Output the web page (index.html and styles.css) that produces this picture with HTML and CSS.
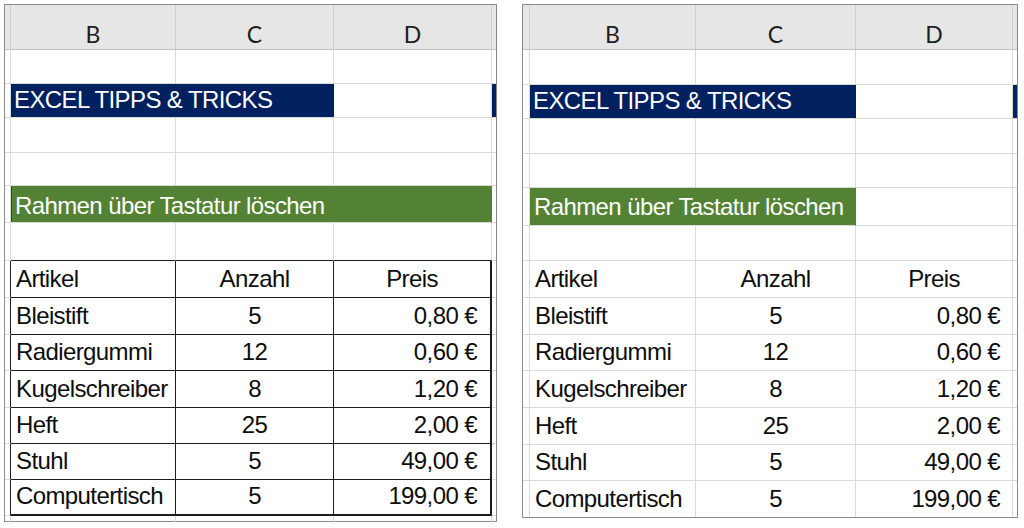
FILE: index.html
```html
<!DOCTYPE html>
<html lang="de">
<head>
<meta charset="utf-8">
<title>Rahmen über Tastatur löschen</title>
<link rel="stylesheet" href="styles.css">
</head>
<body>
<div class="page">
  <div class="sheet sheet-left">
    <div class="row hdr">
      <div class="c"></div><div class="c">B</div><div class="c">C</div><div class="c">D</div><div class="c"></div>
    </div>
    <div class="row h1"><div class="c"></div><div class="c"></div><div class="c"></div><div class="c"></div><div class="c"></div></div>
    <div class="row h2">
      <div class="c"></div>
      <div class="c blue span2">EXCEL TIPPS &amp; TRICKS</div>
      <div class="c"></div>
      <div class="c blue-e"></div>
    </div>
    <div class="row h3"><div class="c"></div><div class="c"></div><div class="c"></div><div class="c"></div><div class="c"></div></div>
    <div class="row h4"><div class="c"></div><div class="c"></div><div class="c"></div><div class="c"></div><div class="c"></div></div>
    <div class="row h5">
      <div class="c"></div>
      <div class="c green span3">Rahmen über Tastatur löschen</div>
      <div class="c"></div>
    </div>
    <div class="row h6 tbl-top"><div class="c"></div><div class="c"></div><div class="c"></div><div class="c"></div><div class="c"></div></div>
    <div class="row t1 tbl"><div class="c"></div><div class="c txt">Artikel</div><div class="c ctr">Anzahl</div><div class="c ctr">Preis</div><div class="c"></div></div>
    <div class="row t2 tbl"><div class="c"></div><div class="c txt">Bleistift</div><div class="c ctr">5</div><div class="c num">0,80 €</div><div class="c"></div></div>
    <div class="row t3 tbl"><div class="c"></div><div class="c txt">Radiergummi</div><div class="c ctr">12</div><div class="c num">0,60 €</div><div class="c"></div></div>
    <div class="row t4 tbl"><div class="c"></div><div class="c txt">Kugelschreiber</div><div class="c ctr">8</div><div class="c num">1,20 €</div><div class="c"></div></div>
    <div class="row t5 tbl"><div class="c"></div><div class="c txt">Heft</div><div class="c ctr">25</div><div class="c num">2,00 €</div><div class="c"></div></div>
    <div class="row t6 tbl"><div class="c"></div><div class="c txt">Stuhl</div><div class="c ctr">5</div><div class="c num">49,00 €</div><div class="c"></div></div>
    <div class="row t7 tbl tbl-last"><div class="c"></div><div class="c txt">Computertisch</div><div class="c ctr">5</div><div class="c num">199,00 €</div><div class="c"></div></div>
    <div class="row tail"><div class="c"></div><div class="c"></div><div class="c"></div><div class="c"></div><div class="c"></div></div>
  </div>

  <div class="sheet sheet-right">
    <div class="row hdr">
      <div class="c"></div><div class="c">B</div><div class="c">C</div><div class="c">D</div><div class="c"></div>
    </div>
    <div class="row h1"><div class="c"></div><div class="c"></div><div class="c"></div><div class="c"></div><div class="c"></div></div>
    <div class="row h2">
      <div class="c"></div>
      <div class="c blue span2">EXCEL TIPPS &amp; TRICKS</div>
      <div class="c"></div>
      <div class="c blue-e"></div>
    </div>
    <div class="row h3"><div class="c"></div><div class="c"></div><div class="c"></div><div class="c"></div><div class="c"></div></div>
    <div class="row h4"><div class="c"></div><div class="c"></div><div class="c"></div><div class="c"></div><div class="c"></div></div>
    <div class="row h5">
      <div class="c"></div>
      <div class="c green span2">Rahmen über Tastatur löschen</div>
      <div class="c"></div>
      <div class="c"></div>
    </div>
    <div class="row h6"><div class="c"></div><div class="c"></div><div class="c"></div><div class="c"></div><div class="c"></div></div>
    <div class="row t1"><div class="c"></div><div class="c txt">Artikel</div><div class="c ctr">Anzahl</div><div class="c ctr">Preis</div><div class="c"></div></div>
    <div class="row t2"><div class="c"></div><div class="c txt">Bleistift</div><div class="c ctr">5</div><div class="c num">0,80 €</div><div class="c"></div></div>
    <div class="row t3"><div class="c"></div><div class="c txt">Radiergummi</div><div class="c ctr">12</div><div class="c num">0,60 €</div><div class="c"></div></div>
    <div class="row t4"><div class="c"></div><div class="c txt">Kugelschreiber</div><div class="c ctr">8</div><div class="c num">1,20 €</div><div class="c"></div></div>
    <div class="row t5"><div class="c"></div><div class="c txt">Heft</div><div class="c ctr">25</div><div class="c num">2,00 €</div><div class="c"></div></div>
    <div class="row t6"><div class="c"></div><div class="c txt">Stuhl</div><div class="c ctr">5</div><div class="c num">49,00 €</div><div class="c"></div></div>
    <div class="row t7"><div class="c"></div><div class="c txt">Computertisch</div><div class="c ctr">5</div><div class="c num">199,00 €</div><div class="c"></div></div>
  </div>
</div>
</body>
</html>
```

FILE: styles.css
```css
html, body {
  margin: 0;
  padding: 0;
  background: #ffffff;
}

.page {
  display: flex;
  align-items: flex-start;
  padding: 4px 0 0 4px;
}

.sheet {
  border: 1px solid #8a8a8a;
  display: flex;
  flex-direction: column;
  background: #ffffff;
  font-family: "Liberation Sans", Arial, sans-serif;
  font-size: 24px;
  letter-spacing: -0.6px;
  color: #0d0d0d;
}

.sheet-left {
  --cols: 6px 165px 158px 158px 4px;
  --num-pad: 13px;
}

.sheet-right {
  --cols: 7px 166px 160px 157px 4px;
  --num-pad: 12px;
  margin-left: 25px;
}

.row {
  display: grid;
  grid-template-columns: var(--cols);
}

.c {
  box-sizing: border-box;
  border-right: 1px solid #dadada;
  border-bottom: 1px solid #dadada;
  display: flex;
  align-items: flex-end;
  line-height: 24px;
  padding-bottom: 6px;
  white-space: nowrap;
  overflow: hidden;
  min-width: 0;
}

.c:last-child {
  border-right: 0;
}

/* column header */
.hdr .c {
  background: #e6e6e6;
  border-right-color: #cdcdcd;
  border-bottom-color: #c4c4c4;
  justify-content: center;
  font-family: Lato, "Open Sans", sans-serif;
  font-size: 23px;
  letter-spacing: 0;
  color: #1e1e1e;
  padding-bottom: 3px;
}

/* row heights (left) */
.sheet-left .hdr { height: 45px; }
.sheet-left .h1 { height: 34px; }
.sheet-left .h2 { height: 34px; }
.sheet-left .h3 { height: 35px; }
.sheet-left .h4 { height: 33px; }
.sheet-left .h5 { height: 37px; }
.sheet-left .h6 { height: 38px; }
.sheet-left .t1, .sheet-left .t2, .sheet-left .t4 { height: 37px; }
.sheet-left .t3, .sheet-left .t5, .sheet-left .t6, .sheet-left .t7 { height: 36px; }
.sheet-left .tail { height: 5px; }
.sheet-left .tail .c { border-bottom: 0; }

/* row heights (right) */
.sheet-right .hdr { height: 45px; }
.sheet-right .h1 { height: 35px; }
.sheet-right .h2 { height: 34px; }
.sheet-right .h3 { height: 35px; }
.sheet-right .h4 { height: 34px; }
.sheet-right .h5 { height: 38px; }
.sheet-right .h6 { height: 35px; }
.sheet-right .t1, .sheet-right .t2, .sheet-right .t4, .sheet-right .t5 { height: 37px; }
.sheet-right .t3, .sheet-right .t6, .sheet-right .t7 { height: 36px; }
.sheet-right .t7 .c { border-bottom: 0; }

.span2 { grid-column: span 2; }
.span3 { grid-column: span 3; }

.blue {
  background: #002060;
  color: #ffffff;
  border-right: 0;
  padding-left: 3px;
  padding-bottom: 5px;
}

.blue-e {
  background: #002060;
}

.green {
  background: #548235;
  color: #ffffff;
  padding-left: 4px;
  padding-bottom: 4px;
  border-right-color: #548235;
}

.sheet-right .green {
  padding-bottom: 6px;
}

.sheet-left .green {
  box-shadow: inset 1px 0 0 #2f4a1e;
}

.txt {
  padding-left: 5px;
}

.ctr {
  justify-content: center;
}

.num {
  justify-content: flex-end;
  padding-right: var(--num-pad);
}

/* bordered table on left sheet */
.tbl-top .c:nth-child(2),
.tbl-top .c:nth-child(3),
.tbl-top .c:nth-child(4) {
  border-bottom-color: #1e1e1e;
}

.tbl .c:nth-child(1),
.tbl .c:nth-child(2),
.tbl .c:nth-child(3) {
  border-right-color: #1e1e1e;
}

.tbl .c:nth-child(4) {
  border-right: 2px solid #1e1e1e;
}

.tbl .c:nth-child(2),
.tbl .c:nth-child(3),
.tbl .c:nth-child(4) {
  border-bottom-color: #1e1e1e;
}

.tbl-last .c:nth-child(2),
.tbl-last .c:nth-child(3),
.tbl-last .c:nth-child(4) {
  border-bottom: 2px solid #1e1e1e;
}
```
